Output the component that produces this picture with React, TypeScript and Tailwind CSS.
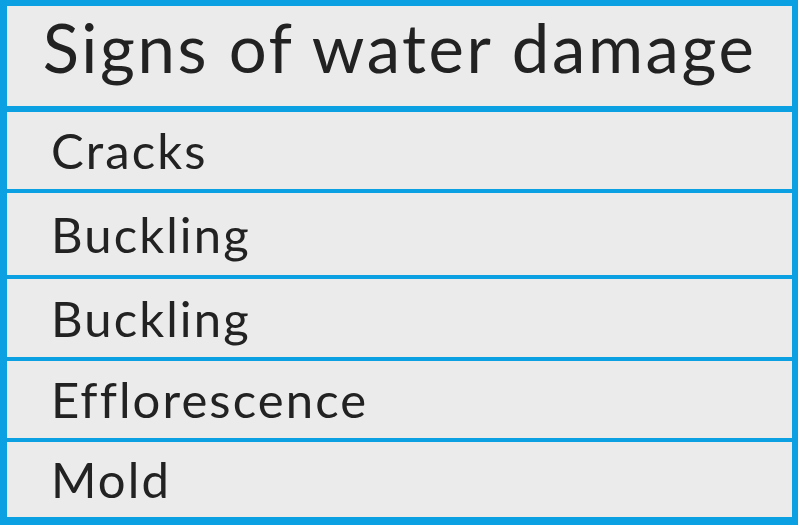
const rows = [
  { label: "Cracks", h: "h-[81px]" },
  { label: "Buckling", h: "h-[86px]" },
  { label: "Buckling", h: "h-[82px]" },
  { label: "Efflorescence", h: "h-[81px]" },
  { label: "Mold", h: "h-[75px]" },
];

export default function App() {
  return (
    <div className="h-[525px] w-[800px] bg-white" style={{ fontFamily: "Lato, 'Open Sans', sans-serif" }}>
      <div className="flex h-[525px] w-[798px] flex-col border-b-[8px] border-l-[7px] border-r-[6px] border-t-[6px] border-[#0aa0e1] bg-[#ebebeb] text-[#222222]">
        <div className="flex h-[106px] shrink-0 items-center justify-center border-b-[6px] border-[#0aa0e1] pb-[18px] text-[67px] leading-none tracking-[2.6px]">
          Signs of water damage
        </div>
        {rows.map((r, i) => (
          <div
            key={i}
            className={`flex shrink-0 items-center pl-[44px] text-[49px] leading-none tracking-[2.1px] ${r.h} ${i < rows.length - 1 ? "border-b-[4px] border-[#0aa0e1]" : ""}`}
          >
            {r.label}
          </div>
        ))}
      </div>
    </div>
  );
}
